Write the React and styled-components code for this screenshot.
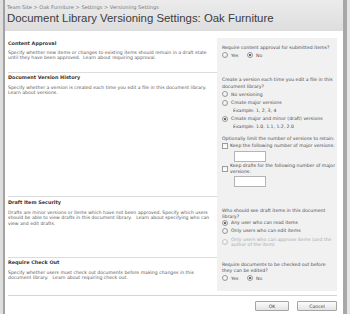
import React from 'react';
import styled, { createGlobalStyle } from 'styled-components';

const GlobalStyle = createGlobalStyle`
  html, body {
    margin: 0;
    padding: 0;
    background: #ffffff;
  }
  body {
    font-family: 'DejaVu Sans', Verdana, sans-serif;
  }
`;

const Frame = styled.div`
  display: flex;
  width: 350px;
  height: 314px;
  overflow: hidden;
  background: #ffffff;
`;

const EdgeLeft = styled.div`
  width: 3px;
  background: #dedede;
  border-right: 2px solid #a2a2a2;
`;

const EdgeRight = styled.div`
  width: 3px;
  background: #e6e6e6;
  border-left: 4px solid #a8a8a8;
`;

const Main = styled.div`
  flex: 1;
  display: flex;
  flex-direction: column;
  min-width: 0;
`;

const Header = styled.header`
  height: 31px;
  padding: 4px 0 0 2px;
  box-sizing: border-box;
  background: linear-gradient(#ececec, #dddddd);
`;

const Breadcrumb = styled.div`
  font-size: 5.1px;
  line-height: 6px;
  color: #7a7a7a;
`;

const Title = styled.h1`
  margin: 2px 0 0;
  font-family: 'Liberation Sans', Arial, sans-serif;
  font-weight: normal;
  font-size: 11.4px;
  line-height: 13px;
  color: #3c3c3c;
`;

const Content = styled.div`
  padding: 7px 6px 0 3px;
`;

const Section = styled.section`
  display: grid;
  grid-template-columns: 209px 120px;
  height: ${(p) => p.$height}px;
`;

const Describe = styled.div`
  padding: ${(p) => p.$top}px 0 0 0;
  border-top: ${(p) => (p.$first ? 'none' : '1px solid #dcdcdc')};
`;

const SectionTitle = styled.h3`
  margin: 0;
  font-size: 4.9px;
  line-height: 6px;
  font-weight: bold;
  color: #333333;
`;

const Description = styled.p`
  margin: ${(p) => p.$gap}px 0 0;
  font-size: 4.6px;
  line-height: 5.6px;
  color: #5a5a5a;
`;

const Controls = styled.div`
  background: #f1f1f1;
  padding: ${(p) => p.$top}px 0 0 5px;
  font-size: 4.6px;
  color: #4a4a4a;
`;

const Question = styled.div`
  line-height: ${(p) => p.$lh || 6}px;
  margin-top: ${(p) => p.$gap || 0}px;
`;

const OptionRow = styled.div`
  display: flex;
  align-items: center;
  height: ${(p) => p.$h || 8.5}px;
  color: ${(p) => (p.$disabled ? '#a8a8a8' : '#4a4a4a')};
`;

const Option = styled.label`
  display: flex;
  align-items: center;
  gap: 3px;
  width: ${(p) => (p.$w ? `${p.$w}px` : 'auto')};
`;

const Radio = styled.span`
  position: relative;
  flex: none;
  width: 4px;
  height: 4px;
  border-radius: 50%;
  border: 1px solid ${(p) => (p.$disabled ? '#c8c8c8' : '#9c9c9c')};
  background: radial-gradient(circle at 40% 35%, #ffffff, #dcdcdc);

  &::after {
    content: '';
    display: ${(p) => (p.$checked ? 'block' : 'none')};
    position: absolute;
    left: 1px;
    top: 1px;
    width: 2px;
    height: 2px;
    border-radius: 50%;
    background: #3a3a3a;
  }
`;

const Check = styled.span`
  flex: none;
  width: 4px;
  height: 4px;
  border: 1px solid #9c9c9c;
  background: linear-gradient(#f4f4f4, #ffffff);
`;

const Example = styled.div`
  padding-left: 11px;
  line-height: 7.5px;
`;

const CheckRow = styled.div`
  display: flex;
  align-items: center;
  gap: 2px;
  margin-top: ${(p) => p.$gap || 0}px;
  line-height: 6px;
`;

const NumberBox = styled.div`
  width: 30px;
  height: 9px;
  margin: ${(p) => p.$gap}px 0 0 12px;
  border: 1px solid #b4b4b4;
  background: #ffffff;
`;

const Footer = styled.div`
  display: flex;
  justify-content: flex-end;
  gap: 8px;
  margin-top: 4px;
  padding-top: 5px;
  width: 329px;
  border-top: 1px solid #d4d4d4;
`;

const Button = styled.button`
  width: ${(p) => p.$w}px;
  height: 10px;
  padding: 0;
  border: 1px solid #a4a4a4;
  border-radius: 1px;
  background: linear-gradient(#fbfbfb, #e4e4e4);
  font-family: 'DejaVu Sans', Verdana, sans-serif;
  font-size: 4.6px;
  color: #444444;
`;

function App() {
  return (
    <>
      <GlobalStyle />
      <Frame>
        <EdgeLeft />
        <Main>
          <Header>
            <Breadcrumb>Team Site &gt; Oak Furniture &gt; Settings &gt; Versioning Settings</Breadcrumb>
            <Title>Document Library Versioning Settings: Oak Furniture</Title>
          </Header>

          <Content>
            <Section $height={34}>
              <Describe $first $top={2}>
                <SectionTitle>Content Approval</SectionTitle>
                <Description $gap={3.5}>
                  Specify whether new items or changes to existing items should remain in a draft state
                  until they have been approved.&nbsp; Learn about requiring approval.
                </Description>
              </Describe>
              <Controls $top={7}>
                <Question>Require content approval for submitted items?</Question>
                <OptionRow>
                  <Option $w={25}><Radio />Yes</Option>
                  <Option><Radio $checked />No</Option>
                </OptionRow>
              </Controls>
            </Section>

            <Section $height={124}>
              <Describe $top={1}>
                <SectionTitle>Document Version History</SectionTitle>
                <Description $gap={4.5}>
                  Specify whether a version is created each time you edit a file in this document library.
                  Learn about versions.
                </Description>
              </Describe>
              <Controls $top={5}>
                <Question $lh={6.5}>Create a version each time you edit a file in this document library?</Question>
                <OptionRow>
                  <Option><Radio />No versioning</Option>
                </OptionRow>
                <OptionRow>
                  <Option><Radio />Create major versions</Option>
                </OptionRow>
                <Example>Example: 1, 2, 3, 4</Example>
                <OptionRow>
                  <Option><Radio $checked />Create major and minor (draft) versions</Option>
                </OptionRow>
                <Example>Example: 1.0, 1.1, 1.2, 2.0</Example>
                <Question $gap={5}>Optionally limit the number of versions to retain:</Question>
                <CheckRow $gap={1}>
                  <Check />
                  Keep the following number of major versions:
                </CheckRow>
                <NumberBox $gap={2} />
                <CheckRow $gap={1}>
                  <Check />
                  Keep drafts for the following number of major versions:
                </CheckRow>
                <NumberBox $gap={1} />
              </Controls>
            </Section>

            <Section $height={61}>
              <Describe $top={2}>
                <SectionTitle>Draft Item Security</SectionTitle>
                <Description $gap={4.5}>
                  Drafts are minor versions or items which have not been approved. Specify which users
                  should be able to view drafts in this document library.&nbsp;&nbsp; Learn about specifying who can
                  view and edit drafts.
                </Description>
              </Describe>
              <Controls $top={12}>
                <Question $lh={5.5}>Who should see draft items in this document library?</Question>
                <OptionRow $h={7}>
                  <Option><Radio $checked />Any user who can read items</Option>
                </OptionRow>
                <OptionRow $h={9}>
                  <Option><Radio />Only users who can edit items</Option>
                </OptionRow>
                <OptionRow $h={13} $disabled>
                  <Option><Radio $disabled />Only users who can approve items (and the author of the item)</Option>
                </OptionRow>
              </Controls>
            </Section>

            <Section $height={34}>
              <Describe $top={1}>
                <SectionTitle>Require Check Out</SectionTitle>
                <Description $gap={4.5}>
                  Specify whether users must check out documents before making changes in this
                  document library.&nbsp;&nbsp; Learn about requiring check out.
                </Description>
              </Describe>
              <Controls $top={5}>
                <Question>Require documents to be checked out before they can be edited?</Question>
                <OptionRow>
                  <Option $w={25}><Radio />Yes</Option>
                  <Option><Radio $checked />No</Option>
                </OptionRow>
              </Controls>
            </Section>

            <Footer>
              <Button $w={34}>OK</Button>
              <Button $w={40}>Cancel</Button>
            </Footer>
          </Content>
        </Main>
        <EdgeRight />
      </Frame>
    </>
  );
}

export default App;
